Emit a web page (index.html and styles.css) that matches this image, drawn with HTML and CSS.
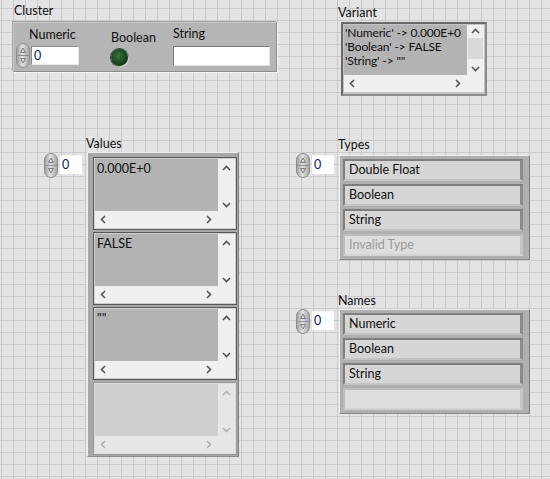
FILE: index.html
```html
<!DOCTYPE html>
<html>
<head>
<meta charset="utf-8">
<link rel="stylesheet" href="styles.css">
</head>
<body>
<div class="panel">

  <!-- Cluster -->
  <div class="ctl cluster-ctl">
    <div class="lbl">Cluster</div>
    <div class="cluster">
      <div class="citem num-item">
        <div class="lbl num-lbl">Numeric</div>
        <div class="numctl">
          <svg class="spin" width="14" height="25" viewBox="0 0 14 25"><defs><linearGradient id="sg" x1="0" x2="1"><stop offset="0" stop-color="#9c9c9c"/><stop offset="0.45" stop-color="#e2e2e2"/><stop offset="1" stop-color="#a2a2a2"/></linearGradient></defs><rect x="0.5" y="0.5" width="13" height="24" rx="6.5" fill="url(#sg)" stroke="#8e8e8e"/><line x1="1" y1="12.5" x2="13" y2="12.5" stroke="#8e8e8e"/><path d="M4.5 9.5 L7 5 L9.5 9.5 Z" fill="none" stroke="#7c7c7c"/><path d="M4.5 15.5 L7 20 L9.5 15.5 Z" fill="none" stroke="#7c7c7c"/></svg>
          <div class="numbox">0</div>
        </div>
      </div>
      <div class="citem bool-item">
        <div class="lbl">Boolean</div>
        <div class="led"></div>
      </div>
      <div class="citem str-item">
        <div class="lbl">String</div>
        <div class="strbox"></div>
      </div>
    </div>
  </div>

  <!-- Variant -->
  <div class="ctl variant-ctl">
    <div class="lbl">Variant</div>
    <div class="vframe">
      <div class="sarea vsarea">
        <div class="stext vtext">
          <div>'Numeric' -&gt; 0.000E+0</div>
          <div>'Boolean' -&gt; FALSE</div>
          <div>'String' -&gt; ""</div>
        </div>
        <div class="vscroll">
          <svg class="chev" width="9" height="6" viewBox="0 0 9 6"><path d="M1 5 L4.5 1.5 L8 5" fill="none" stroke="currentColor" stroke-width="1.6"/></svg>
          <div class="thumb"></div>
          <svg class="chev" width="9" height="6" viewBox="0 0 9 6"><path d="M1 1 L4.5 4.5 L8 1" fill="none" stroke="currentColor" stroke-width="1.6"/></svg>
        </div>
        <div class="hscroll">
          <svg class="chev" width="6" height="9" viewBox="0 0 6 9"><path d="M5 1 L1.5 4.5 L5 8" fill="none" stroke="currentColor" stroke-width="1.6"/></svg>
          <svg class="chev" width="6" height="9" viewBox="0 0 6 9"><path d="M1 1 L4.5 4.5 L1 8" fill="none" stroke="currentColor" stroke-width="1.6"/></svg>
        </div>
        <div class="corner"></div>
      </div>
    </div>
  </div>

  <!-- Values array -->
  <div class="ctl values-ctl arrctl">
    <div class="lbl arr-lbl">Values</div>
    <div class="arr-row">
      <div class="index">
        <svg class="spin" width="14" height="25" viewBox="0 0 14 25"><rect x="0.5" y="0.5" width="13" height="24" rx="6.5" fill="url(#sg)" stroke="#8e8e8e"/><line x1="1" y1="12.5" x2="13" y2="12.5" stroke="#8e8e8e"/><path d="M4.5 9.5 L7 5 L9.5 9.5 Z" fill="none" stroke="#7c7c7c"/><path d="M4.5 15.5 L7 20 L9.5 15.5 Z" fill="none" stroke="#7c7c7c"/></svg>
        <div class="idxbox">0</div>
      </div>
      <div class="aframe vals">
        <div class="selem">
          <div class="sarea">
            <div class="stext">0.000E+0</div>
            <div class="vscroll">
              <svg class="chev" width="9" height="6" viewBox="0 0 9 6"><path d="M1 5 L4.5 1.5 L8 5" fill="none" stroke="currentColor" stroke-width="1.6"/></svg>
              <svg class="chev" width="9" height="6" viewBox="0 0 9 6"><path d="M1 1 L4.5 4.5 L8 1" fill="none" stroke="currentColor" stroke-width="1.6"/></svg>
            </div>
            <div class="hscroll">
              <svg class="chev" width="6" height="9" viewBox="0 0 6 9"><path d="M5 1 L1.5 4.5 L5 8" fill="none" stroke="currentColor" stroke-width="1.6"/></svg>
              <svg class="chev" width="6" height="9" viewBox="0 0 6 9"><path d="M1 1 L4.5 4.5 L1 8" fill="none" stroke="currentColor" stroke-width="1.6"/></svg>
            </div>
            <div class="corner"></div>
          </div>
        </div>
        <div class="selem">
          <div class="sarea">
            <div class="stext">FALSE</div>
            <div class="vscroll">
              <svg class="chev" width="9" height="6" viewBox="0 0 9 6"><path d="M1 5 L4.5 1.5 L8 5" fill="none" stroke="currentColor" stroke-width="1.6"/></svg>
              <svg class="chev" width="9" height="6" viewBox="0 0 9 6"><path d="M1 1 L4.5 4.5 L8 1" fill="none" stroke="currentColor" stroke-width="1.6"/></svg>
            </div>
            <div class="hscroll">
              <svg class="chev" width="6" height="9" viewBox="0 0 6 9"><path d="M5 1 L1.5 4.5 L5 8" fill="none" stroke="currentColor" stroke-width="1.6"/></svg>
              <svg class="chev" width="6" height="9" viewBox="0 0 6 9"><path d="M1 1 L4.5 4.5 L1 8" fill="none" stroke="currentColor" stroke-width="1.6"/></svg>
            </div>
            <div class="corner"></div>
          </div>
        </div>
        <div class="selem">
          <div class="sarea">
            <div class="stext">""</div>
            <div class="vscroll">
              <svg class="chev" width="9" height="6" viewBox="0 0 9 6"><path d="M1 5 L4.5 1.5 L8 5" fill="none" stroke="currentColor" stroke-width="1.6"/></svg>
              <svg class="chev" width="9" height="6" viewBox="0 0 9 6"><path d="M1 1 L4.5 4.5 L8 1" fill="none" stroke="currentColor" stroke-width="1.6"/></svg>
            </div>
            <div class="hscroll">
              <svg class="chev" width="6" height="9" viewBox="0 0 6 9"><path d="M5 1 L1.5 4.5 L5 8" fill="none" stroke="currentColor" stroke-width="1.6"/></svg>
              <svg class="chev" width="6" height="9" viewBox="0 0 6 9"><path d="M1 1 L4.5 4.5 L1 8" fill="none" stroke="currentColor" stroke-width="1.6"/></svg>
            </div>
            <div class="corner"></div>
          </div>
        </div>
        <div class="selem disabled">
          <div class="sarea">
            <div class="stext"></div>
            <div class="vscroll">
              <svg class="chev" width="9" height="6" viewBox="0 0 9 6"><path d="M1 5 L4.5 1.5 L8 5" fill="none" stroke="currentColor" stroke-width="1.6"/></svg>
              <svg class="chev" width="9" height="6" viewBox="0 0 9 6"><path d="M1 1 L4.5 4.5 L8 1" fill="none" stroke="currentColor" stroke-width="1.6"/></svg>
            </div>
            <div class="hscroll">
              <svg class="chev" width="6" height="9" viewBox="0 0 6 9"><path d="M5 1 L1.5 4.5 L5 8" fill="none" stroke="currentColor" stroke-width="1.6"/></svg>
              <svg class="chev" width="6" height="9" viewBox="0 0 6 9"><path d="M1 1 L4.5 4.5 L1 8" fill="none" stroke="currentColor" stroke-width="1.6"/></svg>
            </div>
            <div class="corner"></div>
          </div>
        </div>
      </div>
    </div>
  </div>

  <!-- Types array -->
  <div class="ctl types-ctl arrctl">
    <div class="lbl arr-lbl">Types</div>
    <div class="arr-row">
      <div class="index">
        <svg class="spin" width="14" height="25" viewBox="0 0 14 25"><rect x="0.5" y="0.5" width="13" height="24" rx="6.5" fill="url(#sg)" stroke="#8e8e8e"/><line x1="1" y1="12.5" x2="13" y2="12.5" stroke="#8e8e8e"/><path d="M4.5 9.5 L7 5 L9.5 9.5 Z" fill="none" stroke="#7c7c7c"/><path d="M4.5 15.5 L7 20 L9.5 15.5 Z" fill="none" stroke="#7c7c7c"/></svg>
        <div class="idxbox">0</div>
      </div>
      <div class="aframe rings">
        <div class="ring">Double Float</div>
        <div class="ring">Boolean</div>
        <div class="ring">String</div>
        <div class="ring disabled">Invalid Type</div>
      </div>
    </div>
  </div>

  <!-- Names array -->
  <div class="ctl names-ctl arrctl">
    <div class="lbl arr-lbl">Names</div>
    <div class="arr-row">
      <div class="index">
        <svg class="spin" width="14" height="25" viewBox="0 0 14 25"><rect x="0.5" y="0.5" width="13" height="24" rx="6.5" fill="url(#sg)" stroke="#8e8e8e"/><line x1="1" y1="12.5" x2="13" y2="12.5" stroke="#8e8e8e"/><path d="M4.5 9.5 L7 5 L9.5 9.5 Z" fill="none" stroke="#7c7c7c"/><path d="M4.5 15.5 L7 20 L9.5 15.5 Z" fill="none" stroke="#7c7c7c"/></svg>
        <div class="idxbox">0</div>
      </div>
      <div class="aframe rings">
        <div class="ring">Numeric</div>
        <div class="ring">Boolean</div>
        <div class="ring">String</div>
        <div class="ring disabled"></div>
      </div>
    </div>
  </div>

</div>
</body>
</html>
```

FILE: styles.css
```css
html, body {
  margin: 0;
  padding: 0;
}
body {
  width: 550px;
  height: 479px;
  overflow: hidden;
  font-family: Lato, "Noto Sans", sans-serif;
  font-size: 12.5px;
  color: #101010;
}
.panel {
  position: relative;
  width: 550px;
  height: 479px;
  background-color: #e4e4e4;
  background-image:
    linear-gradient(to right, #cbcbcb 1px, transparent 1px),
    linear-gradient(to bottom, #cbcbcb 1px, transparent 1px);
  background-size: 12px 12px;
  background-position: 1px 8px;
}
.ctl {
  position: absolute;
}
.lbl {
  line-height: 14px;
  white-space: nowrap;
}

/* ---------- Cluster ---------- */
.cluster-ctl { left: 14px; top: 4px; }
.cluster-ctl > .lbl { margin-bottom: 4px; }
.cluster {
  margin-left: -1px;
  width: 262px;
  height: 48px;
  background: #b5b5b5;
  border: 1px solid;
  border-color: #c9c9c9 #8c8c8c #8c8c8c #c9c9c9;
  box-shadow: 1px 1px 0 #f6f6f6, -1px -1px 0 #a2a2a2;
  display: flex;
  align-items: flex-start;
}
.citem { display: flex; flex-direction: column; flex: none; }
.num-item { margin-left: 2px; margin-top: 5px; width: 63px; }
.num-lbl { margin-left: 13px; margin-bottom: 1px; }
.numctl { display: flex; align-items: flex-start; gap: 1px; }
.spin { display: block; flex: none; }
.numbox {
  margin-top: 3px;
  width: 44px;
  height: 17px;
  background: #fff;
  border-top: 1px solid #8a8a8a;
  border-left: 1px solid #8a8a8a;
  border-bottom: 1px solid #e8e8e8;
  border-right: 1px solid #e8e8e8;
  padding-left: 2px;
  line-height: 17px;
  color: #0a1a66;
}
.bool-item { margin-left: 32px; margin-top: 8px; gap: 4px; width: 50px; }
.led {
  width: 17px;
  height: 17px;
  border-radius: 50%;
  background: radial-gradient(circle at 45% 40%, #3c773c 0, #24552a 35%, #123512 75%, #0c260c 100%);
  box-shadow: 1px 1px 1px #e6e6e6, 0 0 0 1px #3a4a3a;
}
.str-item { margin-left: 12px; margin-top: 4px; gap: 5px; }
.strbox {
  width: 95px;
  height: 18px;
  background: #fff;
  border-top: 1px solid #7a7a7a;
  border-left: 1px solid #7a7a7a;
  border-bottom: 1px solid #e0e0e0;
  border-right: 1px solid #e0e0e0;
}

/* ---------- Scroll text areas ---------- */
.sarea {
  display: grid;
  grid-template-columns: 123px 17px;
  grid-template-rows: 52px 17px;
}
.stext {
  background: #b3b3b3;
  padding: 2px 0 0 2px;
  line-height: 15px;
  white-space: nowrap;
  overflow: hidden;
  color: #101010;
}
.vscroll {
  background: #f0f0f0;
  color: #555;
  display: flex;
  flex-direction: column;
  align-items: center;
  justify-content: space-between;
  padding: 6px 0 3px;
}
.hscroll {
  background: #f0f0f0;
  color: #555;
  display: flex;
  align-items: center;
  justify-content: space-between;
  padding: 0 6px 0 5px;
}
.corner { background: #f0f0f0; }
.chev { display: block; }

/* ---------- Variant ---------- */
.variant-ctl { left: 338px; top: 6px; }
.variant-ctl > .lbl { margin-bottom: 2px; }
.vframe {
  margin-left: 3px;
  width: 140px;
  border: 2px solid;
  border-color: #6a6a6a #8c8c8c #8c8c8c #6a6a6a;
  padding: 1px 1px 2px 1px;
  background: #c4c4c4;
}
.vsarea { grid-template-rows: 50px 17px; }
.vtext {
  padding: 1px 0 0 1px;
  line-height: 14px;
  font-size: 12px;
  letter-spacing: -0.15px;
}
.vsarea .vscroll { padding: 3px 0 3px; justify-content: flex-start; }
.vsarea .vscroll .thumb {
  margin-top: 4px;
  width: 15px;
  height: 21px;
  background: #d9d9d9;
}
.vsarea .vscroll .chev:last-child { margin-top: auto; }

/* ---------- Arrays ---------- */
.arr-lbl { margin-left: 42px; }
.arr-row { display: flex; align-items: flex-start; }
.index { display: flex; align-items: flex-start; gap: 2px; width: 43px; flex: none; }
.idxbox {
  margin-top: 2px;
  width: 20px;
  height: 18px;
  background: #fff;
  border-top: 1px solid #f4f4f4;
  padding-left: 2px;
  line-height: 17px;
  color: #0a1a66;
}
.aframe {
  background: #a8a8a8;
  border: 1px solid;
  border-color: #f0f0f0 #7c7c7c #8a8a8a #f0f0f0;
  display: flex;
  flex-direction: column;
}

.values-ctl { left: 44px; top: 137px; }
.values-ctl .arr-row { margin-top: 1px; }
.values-ctl .index { margin-top: 1px; }
.aframe.vals {
  padding: 4px 1px 1px 5px;
  gap: 2px;
}
.selem {
  border: 1px solid #585858;
  padding: 1px;
  background: #cfcfcf;
}
.selem.disabled { border-color: #9a9a9a; background: #dcdcdc; }
.selem.disabled .stext { background: #cfcfcf; }
.selem.disabled .vscroll,
.selem.disabled .hscroll,
.selem.disabled .corner { background: #e6e6e6; color: #b2b2b2; }

.types-ctl { left: 296px; top: 138px; }
.names-ctl { left: 296px; top: 294px; }
.types-ctl .arr-row,
.names-ctl .arr-row { margin-top: 1px; }
.types-ctl .aframe { margin-top: 2px; }
.aframe.rings {
  padding: 3px 6px 3px 3px;
  gap: 3px;
  background: #b0b0b0;
}
.ring {
  width: 171px;
  height: 18px;
  line-height: 18px;
  padding-left: 4px;
  background: #d6d6d6;
  border-style: solid;
  border-width: 2px 3px 2px 2px;
  border-color: #7e7e7e #8a8a8a #c4c4c4 #7e7e7e;
  color: #101010;
  white-space: nowrap;
}
.ring.disabled {
  background: #dedede;
  border-color: #bdbdbd #c4c4c4 #d4d4d4 #bdbdbd;
  color: #9a9a9a;
}
```
